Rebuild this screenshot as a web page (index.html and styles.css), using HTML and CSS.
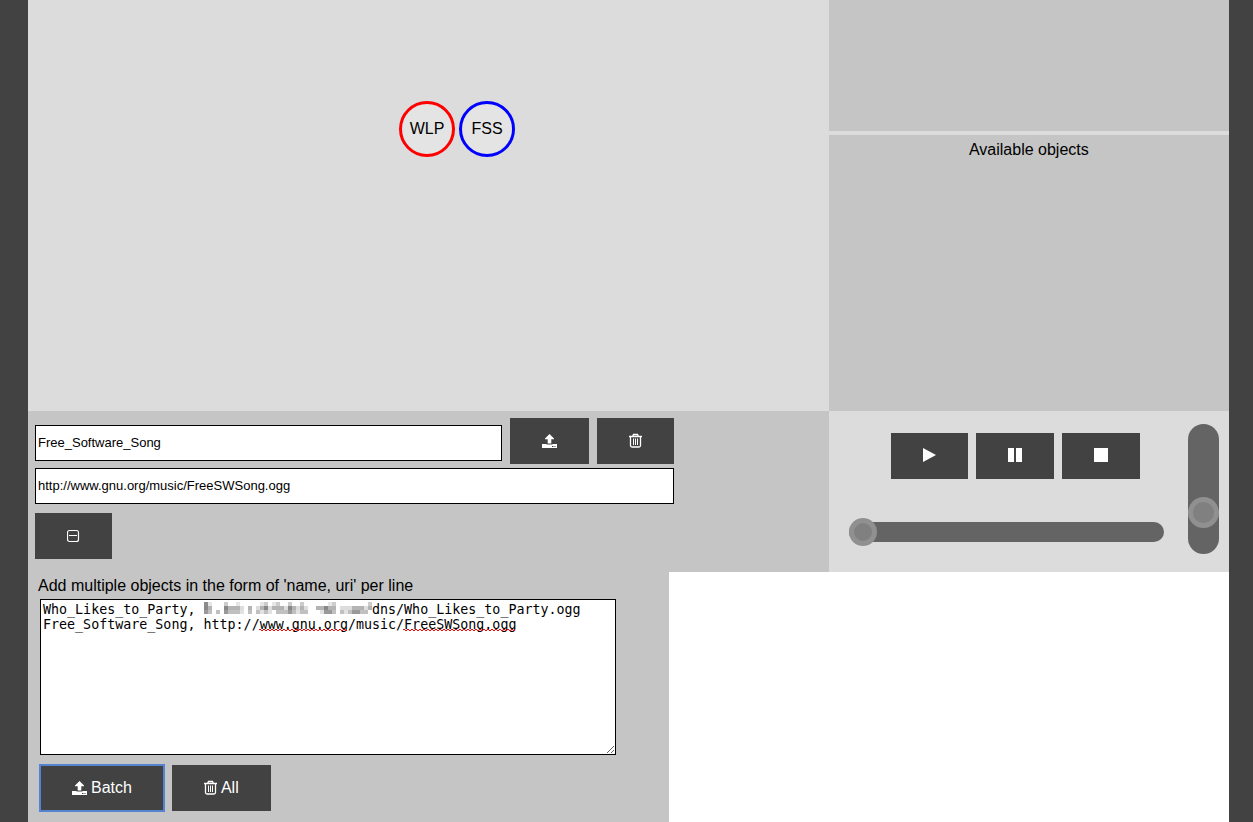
FILE: index.html
```html
<!DOCTYPE html>
<html lang="en">
<head>
<meta charset="utf-8">
<title>Audio objects</title>
<link rel="stylesheet" href="styles.css">
</head>
<body>
<svg class="sprite" aria-hidden="true">
  <symbol id="upload" viewBox="0 0 15 16">
    <path d="M7.500 1 12 5.500V6.200H9.300V10.500H5.700V6.200H3V5.500Z" fill="currentColor"/>
    <path d="M0 11H4.500V11.500H10.500V11H15V15H0ZM10 13V14H11.500V13ZM12.500 13V14H13.500V13Z" fill="currentColor" fill-rule="evenodd"/>
  </symbol>
  <symbol id="trash" viewBox="0 0 13 16">
    <path d="M0 3.500H13M3.500 3.500 4.500 1.500H8.500L9.500 3.500M1.500 3.500V12.500Q1.500 14 3 14H10Q11.500 14 11.500 12.500V3.500" fill="none" stroke="currentColor" stroke-width="1.300"/>
    <path d="M4.500 5.500V12M6.500 5.500V12M8.500 5.500V12" fill="none" stroke="currentColor"/>
  </symbol>
</svg>
<main class="app">
  <section class="canvas" aria-label="Scene">
    <div class="node node-red">WLP</div>
    <div class="node node-blue">FSS</div>
  </section>
  <aside class="side">
    <div class="side-top"></div>
    <div class="side-list">Available objects</div>
  </aside>
  <section class="editor">
    <div class="editor-form">
      <div class="name-row">
        <input class="field name-field" type="text" aria-label="Name" value="Free_Software_Song">
        <button class="btn" type="button" aria-label="Add"><svg class="icon wide"><use href="#upload"/></svg></button>
        <button class="btn" type="button" aria-label="Delete"><svg class="icon"><use href="#trash"/></svg></button>
      </div>
      <input class="field" type="text" aria-label="URI" value="http://www.gnu.org/music/FreeSWSong.ogg">
      <button class="btn btn-toggle" type="button" aria-label="Collapse">
        <svg class="icon" viewBox="0 0 13 16"><rect x="0.500" y="2.500" width="11" height="11" rx="2" fill="none" stroke="currentColor" stroke-width="1.200"/><path d="M2 7.500H10" stroke="currentColor"/></svg>
      </button>
    </div>
  </section>
  <section class="player">
    <div class="transport">
      <div class="buttons">
        <button class="btn" type="button" aria-label="Play"><svg class="icon" viewBox="0 0 13 16"><path d="M0 0 13 7 0 14Z" fill="currentColor"/></svg></button>
        <button class="btn" type="button" aria-label="Pause"><svg class="icon square" viewBox="0 0 14 16"><path d="M0 0H6V14H0ZM8 0H14V14H8Z" fill="currentColor"/></svg></button>
        <button class="btn" type="button" aria-label="Stop"><svg class="icon square" viewBox="0 0 14 16"><path d="M0 0H14V14H0Z" fill="currentColor"/></svg></button>
      </div>
      <input class="seek" type="range" min="0" max="100" value="0" aria-label="Position">
    </div>
    <input class="volume" type="range" min="0" max="100" value="26" aria-label="Volume">
  </section>
</main>
<section class="batch">
  <label class="batch-label" for="batch">Add multiple objects in the form of 'name, uri' per line</label>
  <div class="batch-box">
    <textarea class="batch-text" id="batch" spellcheck="false">Who_Likes_to_Party,                      dns/Who_Likes_to_Party.ogg
Free_Software_Song, http://www.gnu.org/music/FreeSWSong.ogg</textarea>
    <svg class="marks" width="480" height="36" aria-hidden="true">
      <defs><pattern id="wave" y="29" width="4" height="2" patternUnits="userSpaceOnUse"><path d="M0 0H2V1H0ZM2 1H4V2H2Z" fill="#f00"/></pattern></defs>
      <rect x="216" y="29" width="88" height="2" fill="url(#wave)"/>
      <rect x="360" y="29" width="112" height="2" fill="url(#wave)"/>
      <g stroke-width="4" fill="none">
        <path d="M161 4H165" stroke="#8c8c8c"/>
        <path d="M181 4H185M221 4H225M233 4H237M245 4H249M257 4H261M289 4H293M325 4H329" stroke="#ccc"/>
        <path d="M165 4H169M193 4H197M217 4H221M229 4H233M285 4H289" stroke="#e6e6e6"/>
        <path d="M161 8H165M181 8H185M221 8H225M245 8H249M281 8H285" stroke="#888"/>
        <path d="M165 8H169M185 8H197M205 8H209M217 8H221M229 8H241M249 8H253M257 8H261M273 8H281M285 8H293M309 8H321M325 8H329" stroke="#b4b4b4"/>
        <path d="M197 8H201M213 8H217M225 8H229M241 8H245M253 8H257M261 8H265M297 8H309M321 8H325" stroke="#ddd"/>
        <path d="M161 12H165M181 12H185M245 12H249M281 12H289M309 12H317" stroke="#999"/>
        <path d="M165 12H169M173 12H177M185 12H197M205 12H209M213 12H217M221 12H225M233 12H245M249 12H253M257 12H265M289 12H293M297 12H301M305 12H309M317 12H325" stroke="#c0c0c0"/>
        <path d="M197 12H201M217 12H221M225 12H229M253 12H257M277 12H281M301 12H305" stroke="#e2e2e2"/>
      </g>
    </svg>
  </div>
  <div class="buttons">
    <button class="btn is-active" type="button"><svg class="icon wide"><use href="#upload"/></svg> Batch</button>
    <button class="btn" type="button"><svg class="icon"><use href="#trash"/></svg> All</button>
  </div>
</section>
</body>
</html>
```
FILE: styles.css
```css
* { box-sizing: border-box; }
body {
  margin: 0;
  min-height: 100vh;
  border: solid #424242;
  border-width: 0 24px 0 28px;
  background: #fff;
  color: #000;
  font: 16px/18px "Liberation Sans", Arial, sans-serif;
}
.sprite { display: none; }
.app { display: grid; grid-template-columns: 2fr 1fr; grid-template-rows: 50vh auto; }
.canvas { position: relative; background: #dcdcdc; }
.node {
  position: absolute;
  top: 101px;
  width: 56px;
  height: 56px;
  border: 3px solid;
  border-radius: 50%;
  background: #e4e4e4;
  line-height: 50px;
  text-align: center;
}
.node-red { left: 371px; border-color: #f00; }
.node-blue { left: 431px; border-color: #00f; }
.side { display: grid; grid-template-rows: 131px 1fr; gap: 4px; background: #dcdcdc; }
.side-top, .side-list, .editor, .batch { background: #c5c5c5; }
.side-list { padding-top: 6px; text-align: center; }
.editor { padding: 7px 7px 13px; }
.editor-form { display: flex; flex-direction: column; width: 81.2%; }
.name-row { display: flex; gap: 8px; align-items: flex-end; margin-bottom: 4px; }
.field {
  width: 100%;
  height: 36px;
  padding: 0 2px 1px;
  border: 1px solid #000;
  background: #fff;
  color: #000;
  font: 13px "Liberation Sans", Arial, sans-serif;
}
.name-field { flex: 1; min-width: 0; margin-bottom: 3px; }
.btn {
  display: inline-flex;
  align-items: center;
  justify-content: center;
  gap: 4px;
  height: 46px;
  padding: 0 32px;
  border: 0;
  background: #424242;
  color: #fff;
  font: inherit;
}
.btn-toggle { align-self: flex-start; margin-top: 9px; }
.icon { flex: none; width: 13px; height: 16px; }
.square { width: 14px; }
.wide { width: 15px; }
.buttons { display: flex; gap: 8px; }
.player { display: flex; gap: 24px; padding: 13px 10px 18px 20px; background: #dcdcdc; }
.transport { display: flex; flex: 1; flex-direction: column; padding-top: 9px; }
.transport .buttons { justify-content: center; padding-left: 18px; }
.seek, .volume { appearance: none; margin: 0; background: transparent; }
.seek { width: 100%; height: 28px; margin-top: 39px; }
.seek::-webkit-slider-runnable-track { height: 20px; border-radius: 10px; background: #646464; }
.seek::-webkit-slider-thumb {
  appearance: none;
  width: 28px;
  height: 28px;
  margin-top: -4px;
  border: 5px solid #909090;
  border-radius: 50%;
  background: #808080;
}
.volume { writing-mode: vertical-lr; direction: rtl; width: 31px; height: 130px; border-radius: 16px; background: #646464; }
.volume::-webkit-slider-thumb {
  appearance: none;
  width: 31px;
  height: 31px;
  border: 5px solid #909090;
  border-radius: 50%;
  background: #808080;
}
.batch { width: 53.4%; min-height: calc(50vh - 161px); padding: 5px 53px 11px 12px; }
.batch-label { display: block; margin-left: -2px; }
.batch-box { position: relative; margin: 4px 0 10px; }
.batch-text {
  display: block;
  width: 100%;
  height: 156px;
  padding: 2px;
  border: 1px solid #000;
  background: #fff;
  color: #000;
  font-family: "DejaVu Sans Mono", monospace;
  line-height: 15px;
}
.marks { position: absolute; top: 1px; left: 3px; pointer-events: none; }
.is-active { outline: 2px solid #5583d0; outline-offset: -1px; }
```
